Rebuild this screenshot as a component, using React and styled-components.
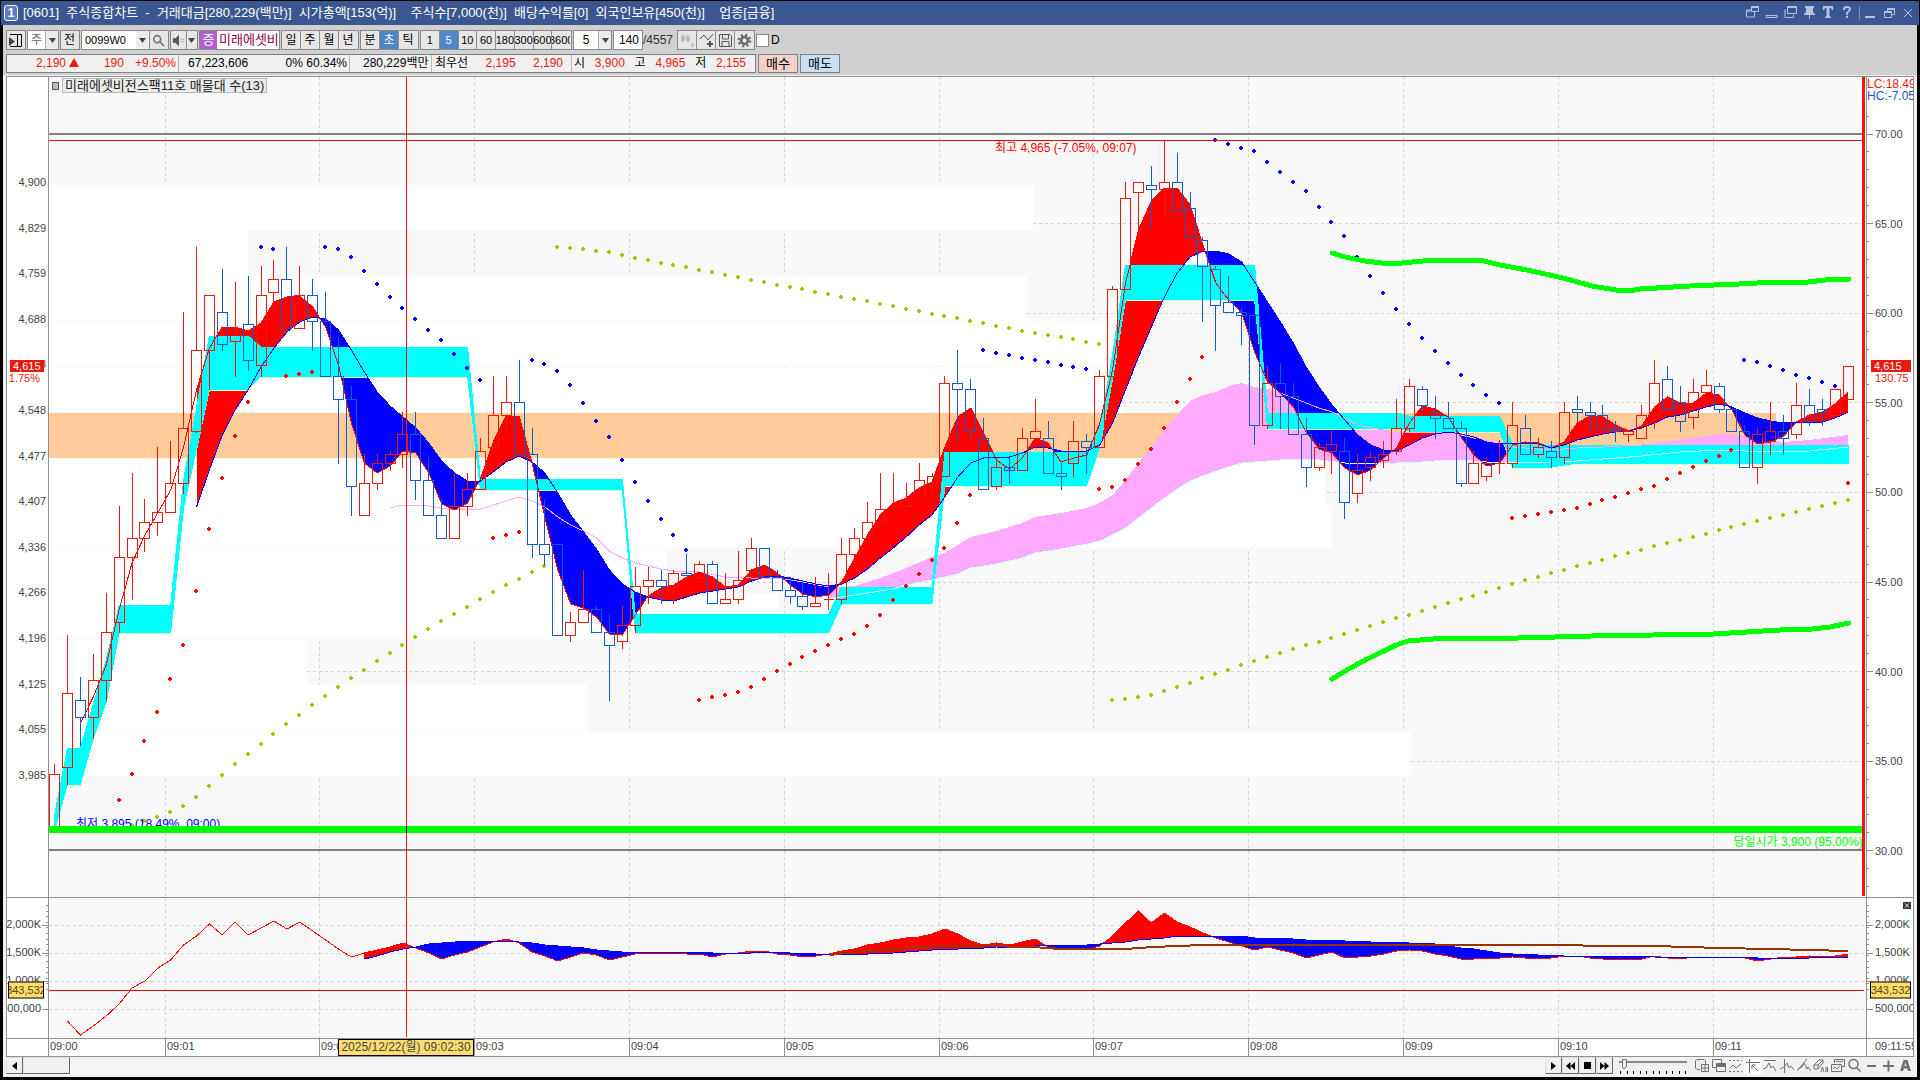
import React from "react";
import styled, { createGlobalStyle } from "styled-components";

const FONT = '"Liberation Sans", "Noto Sans CJK KR", sans-serif';

const GlobalStyle = createGlobalStyle`
  * { box-sizing: border-box; }
  html, body { margin: 0; background: #000; }
  body, button, input, select { font-family: ${FONT}; font-size: 12px; line-height: 14px; }
`;

/* ---------- colours ---------- */
const UP = "#e81a0c";
const DOWN = "#145ac8";
const LINE = "#909090";

/* ---------- frame ---------- */
const Page = styled.div`
  display: flex;
  flex-direction: column;
  height: 100vh;
  min-height: 600px;
  padding: 1px 0 3px;
  background: #000;
  overflow: hidden;
`;
const TitleBar = styled.header`
  flex: none;
  display: flex;
  align-items: center;
  height: 24px;
  margin: 0 1px;
  padding: 0 2px 0 3px;
  background: #3a5792;
  color: #fff;
`;
const Badge = styled.span`
  width: 14px;
  height: 16px;
  margin-right: 5px;
  border: 1px solid #fff;
  border-radius: 3px;
  background: #5b7cc0;
  font-weight: bold;
  text-align: center;
`;
const Title = styled.h1`
  flex: 1;
  margin: 0;
  font-size: 13px;
  font-weight: normal;
  line-height: 16px;
  white-space: pre;
`;
const WindowTools = styled.div`
  display: flex;
  align-items: center;
  gap: 3px;
`;
const TitleButton = styled.button`
  display: flex;
  width: 16px;
  height: 16px;
  padding: 0;
  border: 0;
  background: none;
  color: #b4c2e2;
`;
const TitleRule = styled.span`
  width: 1px;
  height: 14px;
  background: #8090a8;
`;
const Body = styled.main`
  flex: 1;
  min-height: 0;
  display: flex;
  flex-direction: column;
  margin: 0 3px;
  background: #f0f0f0;
`;
const Controls = styled.div`
  flex: none;
  display: flex;
  flex-direction: column;
  gap: 4px;
  padding: 5px 3px 2px;
  background: #d0d0d0;
  border-bottom: 1px solid #eee;
`;
const Row = styled.div`
  display: flex;
  align-items: center;
  gap: ${(p) => p.$gap || 0}px;
`;

/* ---------- toolbar ---------- */
const Group = styled.div`
  flex: none;
  display: flex;
  width: ${(p) => (p.$w ? p.$w + "px" : "auto")};
  height: 20px;
  border: 1px solid #888;
  background: ${(p) => p.$bg || "#eee"};
  overflow: hidden;
`;
const ToolButton = styled.button`
  flex: ${(p) => p.$flex || "1 1 0"};
  min-width: 0;
  display: flex;
  align-items: center;
  justify-content: center;
  padding: 0;
  border: 0;
  border-right: 1px solid ${(p) => (p.$last ? "transparent" : "#8c8c8c")};
  background: ${(p) => (p.$on ? "#4f86c6" : p.$bg || "#e6e6e6")};
  color: ${(p) => (p.$on ? "#fff" : p.$color || "#000")};
  font-size: ${(p) => (p.$small ? 11 : 12)}px;
  overflow: hidden;
  white-space: nowrap;
`;
const Field = styled.input`
  flex: 1;
  min-width: 0;
  height: 18px;
  padding: 0 3px;
  border: 0;
  background: #fff;
  text-align: ${(p) => p.$align || "left"};
  font-size: ${(p) => (p.$small ? 11 : 12)}px;
  color: #000;
`;
const Picker = styled.select`
  flex: 1;
  min-width: 0;
  height: 18px;
  padding: 0 3px;
  border: 0;
  border-radius: 0;
  appearance: none;
  background: #fff;
  color: ${(p) => p.$color || "#000"};
  text-align: center;
`;
const ArrowCell = styled.span`
  flex: none;
  display: flex;
  align-items: center;
  justify-content: center;
  width: 13px;
  border-left: 1px solid #aaa;
  background: #ececec;
`;
const Stock = styled.div`
  flex: none;
  display: flex;
  width: 81px;
  height: 20px;
  border: 1px solid #888;
  background: #fff;
  color: #8c0046;
  font-size: 13px;
  line-height: 18px;
  white-space: nowrap;
  overflow: hidden;
`;
const StockMark = styled.span`
  flex: none;
  width: 17px;
  margin-right: 2px;
  background: #b060d0;
  color: #fff;
  text-align: center;
`;
const Total = styled.span`
  width: 33px;
  margin-left: -1px;
  color: #333;
`;
const Check = styled.label`
  display: flex;
  align-items: center;
  gap: 2px;
  input {
    width: 13px;
    height: 13px;
    margin: 0;
    border: 1px solid #888;
    appearance: none;
    background: #fff;
  }
`;

/* ---------- quote line ---------- */
const Quote = styled.dl`
  flex: none;
  display: flex;
  width: 750px;
  height: 19px;
  margin: 0;
  border: 1px solid #808080;
  background: #f0f0f0;
  line-height: 17px;
`;
const Cell = styled.div`
  display: flex;
  justify-content: space-between;
  width: ${(p) => p.$w}px;
  padding: ${(p) => p.$pad};
  border-right: ${(p) => (p.$last ? "0" : "1px solid #b8b8b8")};
  white-space: nowrap;
  dt, dd { margin: 0; }
`;
const ChangeCell = styled(Cell)`
  gap: 11px;
  dd:first-child { margin-right: auto; }
`;
const Red = styled.dd`
  color: #e81a0c;
`;
const Triangle = styled.svg`
  margin-left: 3px;
`;
const OrderButton = styled.button`
  width: 40px;
  height: 19px;
  padding: 0;
  border: 1px solid #808080;
  background: ${(p) => p.$bg};
  color: #000;
  font-size: 13px;
`;

/* ---------- chart ---------- */
const ChartFrame = styled.section`
  flex: 1;
  min-height: 0;
  display: grid;
  grid-template-columns: 42px minmax(0, 1fr) 47px;
  grid-template-rows: minmax(0, 820fr) minmax(0, 140fr) 17px;
  row-gap: 1px;
  margin: 0 3px;
  border: 1px solid ${LINE};
  background: ${LINE};
`;
const Pane = styled.div`
  position: relative;
  min-width: 0;
  min-height: 0;
  background: ${(p) => p.$bg || "#f8f8f8"};
  overflow: hidden;
`;
const Axis = styled.div`
  position: relative;
  min-height: 0;
  background: #fff;
  border-left: ${(p) => (p.$side === "right" ? `1px solid ${LINE}` : "0")};
  border-right: ${(p) => (p.$side === "left" ? `1px solid ${LINE}` : "0")};
  overflow: hidden;
`;
const Fill = styled.svg`
  display: block;
  width: 100%;
  height: 100%;
`;
const AxisLabel = styled.span`
  position: absolute;
  ${(p) => (p.$side === "left" ? `right: ${p.$inset || 2}px;` : "left: 8px;")}
  transform: translateY(-50%);
  color: ${(p) => p.$color || "#444"};
  font-size: 11px;
  line-height: 12px;
  white-space: nowrap;
`;
const PriceTag = styled(AxisLabel)`
  ${(p) => (p.$side === "left" ? "right: 4px; width: 34px;" : "left: 4px; width: 40px;")}
  padding: 0 3px;
  background: ${UP};
  color: #fff;
`;
const CrossTag = styled.span`
  position: absolute;
  left: ${(p) => (p.$side === "left" ? 1 : 3)}px;
  right: ${(p) => (p.$side === "left" ? 4 : 2)}px;
  transform: translateY(-50%);
  display: flex;
  justify-content: center;
  border: 1px solid #000;
  background: #ffdd6e;
  color: #554400;
  font-size: 11px;
  line-height: 15px;
  overflow: hidden;
`;
const Corner = styled.div`
  position: absolute;
  top: 1px;
  left: 0;
  color: ${UP};
  font-size: 12px;
  line-height: 12px;
  white-space: nowrap;
  span { display: block; color: ${DOWN}; }
`;
const Note = styled.span`
  position: absolute;
  color: ${(p) => p.$color};
  font-size: 12px;
  line-height: 12px;
  white-space: nowrap;
`;
const Legend = styled.div`
  position: absolute;
  top: 1px;
  left: 3px;
  display: flex;
  align-items: center;
  gap: 3px;
  color: #222;
  font-size: 13px;
  &::before { content: ""; width: 5px; height: 6px; border: 1px solid #555; background: #bbb; }
  span { padding: 0 2px; border: 1px solid #b8b8b8; background: #ececec; line-height: 13px; }
`;
const TimeLabel = styled.span`
  position: absolute;
  top: 0;
  height: 17px;
  padding-left: 1px;
  border-left: ${(p) => (p.$first ? "0" : `1px solid ${LINE}`)};
  color: #444;
  font-size: 11px;
  line-height: 15px;
`;
const TimeTag = styled.span`
  position: absolute;
  top: 0;
  width: 136px;
  height: 17px;
  border: 1px solid #000;
  background: #ffdd6e;
  color: #444;
  font-size: 12px;
  line-height: 14px;
  text-align: center;
  white-space: nowrap;
`;
const PaneClose = styled.button`
  position: absolute;
  top: 4px;
  right: 2px;
  width: 8px;
  height: 7px;
  padding: 0;
  border: 0;
  background: #333;
  display: flex;
`;
const BaseBand = styled.div`
  position: absolute;
  left: 0;
  right: 0;
  height: 7px;
`;

/* ---------- bottom bar ---------- */
const BottomBar = styled.footer`
  flex: none;
  display: flex;
  height: 20px;
  padding: 0 3px 2px;
  background: #f0f0f0;
`;
const Track = styled.div`
  flex: 1;
  display: flex;
  background: repeating-conic-gradient(#f0f0f0 0 25%, #f9f9f9 0 50%) 0 0 / 2px 2px;
`;
const Raised = styled.button`
  width: ${(p) => p.$w}px;
  height: 17px;
  display: flex;
  align-items: center;
  justify-content: center;
  padding: 0;
  border: 1px solid;
  border-color: #e0e0e0 #666 #666 #e0e0e0;
  background: #f0f0f0;
  color: #000;
`;
const Speed = styled.label`
  display: flex;
  width: 80px;
  justify-content: center;
  position: relative;
  input { position: absolute; inset: 0; margin: 0; opacity: 0; }
`;
const DrawTool = styled.button`
  width: 17px;
  height: 17px;
  display: flex;
  align-items: center;
  justify-content: center;
  padding: 0;
  border: 0;
  background: ${(p) => (p.$on ? "#fff" : "none")};
  color: #707070;
`;

/* ---------- data ---------- */
const X0 = 54.6;
const STEP = 12.903;
const cx = (i) => X0 + STEP * i;

/* [up, high, top, bottom, low] */
const CANDLES = [
  [1,764,774,829,829],[1,635,693,767,785],[0,677,700,717,746],[1,654,680,717,739],[1,593,632,680,701],
  [1,506,557,622,633],[1,473,538,557,600],[1,499,522,538,552],[1,447,512,522,536],[1,441,483,512,512],
  [1,312,428,483,494],[1,247,350,431,433],[1,295,295,350,390],[0,269,312,344,351],[1,282,334,341,377],
  [0,276,324,360,371],[1,266,295,365,377],[1,260,279,292,312],[0,247,279,328,328],[1,266,295,328,328],
  [0,279,295,321,351],[0,292,321,376,376],[0,337,376,399,464],[0,386,399,486,516],[1,454,483,515,515],
  [1,454,463,483,490],[1,451,454,463,471],[1,412,434,454,468],[0,412,434,480,500],[0,457,480,515,515],
  [0,499,515,538,538],[1,473,506,538,538],[1,473,489,506,516],[1,438,451,489,489],[1,376,415,447,454],
  [1,376,402,415,434],[0,360,402,454,454],[0,428,454,544,558],[0,499,544,554,565],[0,544,544,635,635],
  [1,612,622,635,642],[1,570,609,622,622],[0,606,609,632,632],[0,615,632,645,701],[1,606,625,641,649],
  [1,567,586,625,633],[1,567,580,586,604],[0,570,580,586,604],[1,570,573,586,604],[0,554,573,575,575],
  [1,561,564,577,577],[0,561,564,603,603],[1,573,599,603,603],[1,551,580,599,604],[1,538,548,570,570],
  [0,548,548,577,577],[0,570,577,590,590],[0,577,590,596,604],[0,583,596,606,610],[1,577,603,606,606],
  [1,573,599,599,610],[1,538,554,599,604],[1,528,538,554,568],[1,502,522,538,538],[1,473,509,522,525],
  [1,473,506,506,510],[1,483,499,506,506],[1,463,480,499,499],[1,473,476,483,493],[1,376,383,476,476],
  [0,350,383,389,442],[0,379,389,431,439],[0,418,438,489,489],[1,457,467,486,490],[0,457,467,470,484],
  [1,428,438,470,470],[1,399,431,438,438],[0,421,438,473,473],[0,463,473,476,490],[1,421,441,463,477],
  [0,434,441,447,474],[1,370,376,447,447],[1,286,289,376,376],[1,182,198,289,289],[1,182,182,192,237],
  [0,166,185,189,228],[1,141,182,189,216],[0,153,182,211,211],[0,192,208,237,237],[0,237,240,266,322],
  [0,266,269,305,351],[0,276,302,312,312],[0,308,312,315,345],[0,315,315,425,445],[1,366,383,425,429],
  [0,363,383,396,429],[0,383,396,434,434],[0,418,434,467,487],[1,443,447,467,471],[1,431,444,451,474],
  [0,438,451,502,519],[1,454,470,493,503],[1,451,457,467,481],[1,441,454,460,468],[1,399,428,451,455],
  [1,379,386,428,432],[0,386,389,405,413],[0,396,412,418,439],[0,402,418,428,428],[0,421,428,483,487],
  [1,451,463,483,483],[1,457,463,476,481],[1,440,463,463,474],[1,402,425,463,468],[0,415,428,454,454],
  [1,438,447,454,458],[0,441,451,457,468],[1,402,412,457,464],[0,396,409,412,422],[0,402,412,415,432],
  [0,405,415,428,428],[0,421,428,431,442],[1,431,431,434,442],[1,405,415,438,438],[1,360,383,415,429],
  [0,366,379,409,409],[0,386,402,421,432],[1,379,392,417,429],[1,370,385,392,392],[0,383,386,409,413],
  [0,409,409,431,431],[0,425,431,467,467],[1,428,434,467,484],[1,402,431,441,455],[0,415,431,438,455],
  [1,383,405,434,439],[0,389,405,421,426],[0,399,409,412,426],[1,389,389,415,415],[1,366,366,399,399],
];

/* short average from candle 2, long average from candle 11 */
const SHORT = [
  723,697,665,610,563,535,513,490,447,390,348,327,327,331,323,302,297,296,307,327,365,423,463,473,466,451,453,473,504,510,503,479,442,416,416,463,517,570,604,608,617,634,635,615,
  596,588,585,577,572,577,587,585,570,565,573,585,594,597,595,582,558,535,515,503,498,488,482,447,417,408,433,460,469,458,438,443,462,458,455,423,370,283,230,201,188,188,205,245,283,300,313,352,382,393,407,432,449,453,468,475,470,458,448,423,406,409,417,437,455,466,463,445,442,443,448,442,423,416,417,425,431,
  426,407,397,403,403,393,395,410,435,444,442,436,422,415,412,404,392,
];
const LONG = [
  507,470,435,410,390,367,348,332,322,317,319,330,350,372,392,406,417,428,443,461,473,481,481,472,462,456,462,473,493,515,532,549,570,584,592,
  597,600,601,597,593,591,589,587,581,577,576,578,581,584,586,584,578,569,558,548,537,525,515,497,477,463,458,457,457,453,447,448,451,451,451,445,423,390,357,327,297,273,257,251,251,254,262,282,302,322,343,367,387,405,420,435,445,450,451,445,438,434,432,434,437,442,444,443,443,444,448,445,440,437,434,432,431,
  428,423,417,415,411,407,404,407,413,418,421,423,422,422,422,418,412,
];

/* volume indicator */
const VOL_LEAD = [1021,1035,1026,1016,1004,988,981,968,960,945,936,924,935,922,935,928,921,929,922,931,940,949,957,953];
const VOL_SHORT = [
  953,950,947,943,948,953,959,955,952,947,942,939,943,952,956,961,957,953,955,960,957,954,
  953,954,953,954,954,957,954,953,951,951,954,955,957,956,954,951,949,945,943,940,938,937,934,929,934,941,945,943,945,942,939,947,949,949,950,946,936,923,911,923,913,922,927,933,938,942,946,950,947,950,953,958,955,952,958,957,956,954,951,
  950,951,954,956,959,959,958,958,957,958,958,958,956,956,958,959,959,959,959,956,958,959,957,957,957,957,958,961,959,957,957,956,957,956,954,
];
const VOL_LONG = [
  959,956,952,949,947,944,943,942,941,941,941,941,942,943,945,946,947,948,950,951,952,952,
  952,952,952,952,952,953,953,953,953,952,952,953,953,954,954,954,954,954,953,953,952,951,950,949,949,948,948,947,947,946,946,945,945,945,945,944,943,942,940,939,938,936,936,936,936,936,936,938,938,938,939,940,940,940,941,941,942,942,942,
  943,943,944,946,948,949,951,953,954,954,955,955,956,956,956,956,956,956,956,957,957,957,957,957,957,957,957,958,958,958,958,958,957,957,957,
];

const CYAN_TOP = [[0,815],[1,748],[2,748],[3,704],[4,660],[5,605],[9,605],[10,480],[11,408],[12,336],[15,336],[16,347],[32,347],[33,479],[44,479],[45,614],[60,614],[61,587],[68,587],[69,452],[80,452],[81,428],[82,355],[83,265],[93,265],[94,413],[104,413],[105,416],[112,416],[113,445],[139,445]];
const CYAN_BOTTOM = [[0,830],[1,784],[2,784],[3,738],[4,702],[5,632],[9,632],[10,507],[11,449],[12,389],[15,389],[16,376],[32,376],[33,489],[44,489],[45,632],[60,632],[61,603],[68,603],[69,485],[80,485],[81,447],[82,378],[83,299],[93,299],[94,428],[104,428],[105,431],[112,431],[113,467],[116,467],[118,463],[139,463]];
const PINK_LINE = [[26,508],[27,505],[29,506],[30,508],[31,510],[33,509],[35,501],[36,497],[37,501],[38,507],[39,517],[40,525],[41,531],[42,538],[43,551],[44,558],[45,563],[46,566],[47,569],[48,571],[50,572],[52,577],[54,578],[56,578],[58,582],[60,587]];
const PINK_TOP = [[60,588],[61,587],[62,586],[64,578],[66,568],[68,557],[69,553],[70,545],[71,537],[73,531],[75,523],[76,517],[78,513],[80,508],[81,503],[82,495],[83,480],[84,463],[85,447],[86,430],[87,415],[88,401],[89,395],[90,392],[91,386],[92,383],[93,387],[94,389],[95,393],[96,398],[98,408],[99,412],[100,418],[101,425],[102,428],[103,430],[104,433],[108,432],[110,438],[112,443],[113,447],[116,450],[118,448],[120,447],[123,445],[125,442],[127,438],[129,434],[130,434],[131,436],[132,439],[134,442],[136,440],[139,435]];
const PINK_BOTTOM = [[60,598],[61,597],[63,593],[65,589],[66,585],[68,580],[70,574],[71,568],[73,564],[75,558],[76,553],[78,549],[80,544],[81,541],[82,535],[83,528],[84,518],[85,508],[86,498],[87,489],[88,481],[89,476],[90,471],[91,467],[92,463],[93,462],[96,459],[98,460],[100,463],[101,464],[104,463],[106,462],[108,460],[110,461],[112,463],[116,462],[117,462],[120,459],[123,456],[126,452],[129,450],[133,452],[136,451],[139,447]];

const GREEN_TOP = "1332,253 1345,257 1365,261 1382,263 1402,263 1433,260 1480,260 1500,265 1527,270 1563,278 1592,286 1616,290 1629,291 1640,289 1690,286 1739,284 1776,282 1800,283 1825,280 1849,279";
const GREEN_BOTTOM = "1332,679 1347,670 1365,660 1384,651 1396,645 1408,641 1445,638 1518,638 1592,636 1714,634 1780,630 1812,629 1830,627 1849,623";
const BROWN = "830,955 853,952 893,949 920,947 947,946 980,946 1033,947 1060,949 1125,949 1153,947 1203,945 1400,945 1512,945 1654,946 1720,948 1770,949 1848,951";

/* dotted trails: first candle, then a y for each candle */
const DOTS = [
  ["#0000ff", 16, [247,249]],
  ["#0000ff", 21, [247,249,257,271,284,297,308,319,330,340,354,368,380]],
  ["#0000ff", 37, [360,364,371,385,403,421,437,460,482,501,519,535,550]],
  ["#0000ff", 72, [350,353,355,358,360,362,365,367,369]],
  ["#0000ff", 90, [140,144,148,151,162,172,182,191,207,222,236,257,276,293,309,324,338,351,363,375,385,395,403]],
  ["#0000ff", 131, [360,362,366,370,375,378,382,386]],
  ["#ff0000", 5, [800,774,741,712,679,645,591,529,478,436,402]],
  ["#ff0000", 18, [376,374,372]],
  ["#ff0000", 34, [538,535,532]],
  ["#ff0000", 50, [700,697,695,692,687,679,671,664,657,651,645,639,634,626,615,600,586,574,560,548,523,495]],
  ["#ff0000", 81, [489,487,480,464,449,428,402,379,357]],
  ["#ff0000", 113, [518,516,514,512,510,508,504,500,497,493,489,486,479,473,467,461,456,450]],
  ["#ff0000", 139, [483]],
  ["#99cc00", 6, [825,821,817,812,806,797,786,775,764,754,744,734,724,715,705,696,687,678,670,661,653,645,637,629,621,614,607,599,592,585,579,572,566]],
  ["#99cc00", 39, [247,248,249,251,252,255,258,260,263,265,267,270,272,275,277,280,282,285,287,289,292,294,297,299,301,304,306,309,311,314,316,318,321,323,326,328,331,333,335,337,339,342,344]],
  ["#99cc00", 82, [700,699,697,695,691,687,683,678,674,670,665,661,657,653,649,645,642,638,634,630,626,622,618,615,611,607,603,599,596,592,588,584,580,577,573,570,566,563,560,556,553,550,546,543,540,537,534,530,527,524,521,518,515,512,509,506,503,500]],
];

const BANDS = [[185,1033],[230,248],[275,1027],[321,1116],[367,1122],[413,1776,"#ffcc99"],[458,1325],[503,1332],[549,666],[594,778],[640,307],[685,587],[731,1411]];
const TIMES = Array.from({ length: 11 }, (_, k) => 165 + 154.8 * k);
const LEVELS = Array.from({ length: 9 }, (_, k) => 134 + 89.6 * k);
const PRICES = ["4,900","4,829","4,759","4,688","4,618","4,548","4,477","4,407","4,336","4,266","4,196","4,125","4,055","3,985"];
const VOLUMES = [["2,000K",924],["1,500K",952],["1,000K",980],["500,000",1008]];

const LEFT = 49;
const WIDTH = 1817;
const atX = (x) => `${((x - LEFT) / WIDTH) * 100}%`;
const mainY = (y) => `${((y - 77) / 820) * 100}%`;
const subY = (y) => `${((y - 898) / 140) * 100}%`;

const series = (from, ys) => ys.map((y, k) => `${cx(from + k).toFixed(1)},${y}`).join(" ");
const points = (list, dy = 0) => list.map(([i, y]) => `${cx(i).toFixed(1)},${y + dy}`);

/* one path for the stretches where a is above b */
function areaBetween(from, a, b) {
  let d = "";
  for (let k = 0; k < a.length - 1; k += 1) {
    const d0 = b[k] - a[k];
    const d1 = b[k + 1] - a[k + 1];
    if (d0 <= 0 && d1 <= 0) continue;
    const x0 = cx(from + k);
    const x1 = cx(from + k + 1);
    if (d0 >= 0 && d1 >= 0) {
      d += `M${x0} ${a[k]}L${x1} ${a[k + 1]}L${x1} ${b[k + 1]}L${x0} ${b[k]}Z`;
    } else {
      const t = d0 / (d0 - d1);
      const xm = x0 + (x1 - x0) * t;
      const ym = a[k] + (a[k + 1] - a[k]) * t;
      d += d0 > 0
        ? `M${x0} ${a[k]}L${xm} ${ym}L${x0} ${b[k]}Z`
        : `M${xm} ${ym}L${x1} ${a[k + 1]}L${x1} ${b[k + 1]}Z`;
    }
  }
  return d;
}

function TimeGrid({ top, bottom }) {
  return TIMES.map((x) => (
    <line key={x} x1={Math.floor(x) + 0.5} x2={Math.floor(x) + 0.5} y1={top} y2={bottom} stroke="#d2d2d2" strokeDasharray="3 3" />
  ));
}

function MainPlot() {
  const shortTail = SHORT.slice(9);
  return (
    <Fill viewBox="49 77 1817 820" preserveAspectRatio="none" shapeRendering="crispEdges" fill="none" role="img" aria-label="가격 차트">
      <TimeGrid top={77} bottom={897} />
      {LEVELS.slice(1, 8).map((y) => (
        <line key={y} x1="49" x2="1862" y1={Math.floor(y) + 0.5} y2={Math.floor(y) + 0.5} stroke="#d2d2d2" strokeDasharray="3 3" />
      ))}
      {BANDS.map(([y, right, color]) => (
        <rect key={y} x="49" y={y} width={right - 49} height="44.5" fill={color || "#fff"} />
      ))}
      <polygon points={[...points(PINK_TOP), ...points(PINK_BOTTOM).reverse()].join(" ")} fill="#ffaaff" />
      <path d={areaBetween(11, shortTail, LONG)} fill="#ff0000" />
      <path d={areaBetween(11, LONG, shortTail)} fill="#0000ff" />
      <polyline points={points(CYAN_BOTTOM, 1).join(" ")} stroke="#d4ffc0" />
      <polygon points={[...points(CYAN_TOP), ...points(CYAN_BOTTOM).reverse()].join(" ")} fill="#00ffff" stroke="#00ffff" />
      <polyline points={points(PINK_LINE).join(" ")} stroke="#ffaaff" />
      <polyline points={points(PINK_TOP.slice(27, 47)).join(" ")} stroke="#ffaaff" />
      <polyline points={points(PINK_BOTTOM).join(" ")} stroke="#ccffff" />
      <polyline points={series(2, SHORT)} stroke="#ff0000" />
      <polyline points={series(11, LONG)} stroke="#0000ff" />
      {DOTS.map(([color, from, ys]) => ys.map((y, k) => {
        const x = Math.floor(cx(from + k));
        return <path key={`${from}-${k}-${y}`} d={`M${x - 1} ${y - 2}h2v1h1v2h-1v1h-2v-1h-1v-2h1z`} fill={color} />;
      }))}
      <polyline points={GREEN_TOP} stroke="#00ff00" strokeWidth="5" strokeLinecap="round" />
      <polyline points={GREEN_BOTTOM} stroke="#00ff00" strokeWidth="5" strokeLinecap="round" />
      {CANDLES.map(([up, high, top, bottom, low], i) => {
        const x = Math.floor(cx(i)) + 0.5;
        return (
          <path
            key={i}
            d={`M${x - 5} ${top + 0.5}h10V${bottom + 0.5}h-10ZM${x} ${high}V${top}M${x} ${bottom}V${low}`}
            stroke={up ? UP : DOWN}
          />
        );
      })}
      <rect x="49" y="133" width="1813" height="2" fill="#808080" />
      <rect x="49" y="140" width="1813" height="1" fill="#ff0000" />
      <rect x="49" y="849" width="1813" height="2" fill="#808080" />
      <rect x="406" y="77" width="1" height="820" fill={UP} />
      <rect x="1862" y="77" width="3" height="819" fill={UP} />
    </Fill>
  );
}

function GreenBase() {
  return (
    <Fill viewBox="0 0 1817 7" preserveAspectRatio="none" shapeRendering="crispEdges" aria-hidden="true">
      <rect width="1813" height="7" fill="#00ff00" />
      <rect x="357" width="1" height="7" fill="#0000a0" />
    </Fill>
  );
}

function SubPlot() {
  return (
    <Fill viewBox="49 898 1817 140" preserveAspectRatio="none" shapeRendering="crispEdges" fill="none" role="img" aria-label="거래량 지표">
      <TimeGrid top={898} bottom={1038} />
      {[925.5, 953.5, 981.5, 1009.5].map((y) => (
        <line key={y} x1="49" x2="1864" y1={y} y2={y} stroke="#d2d2d2" strokeDasharray="3 3" />
      ))}
      <path d={areaBetween(24, VOL_SHORT, VOL_LONG)} fill="#ff0000" />
      <path d={areaBetween(24, VOL_LONG, VOL_SHORT)} fill="#0000ff" />
      <polyline points={series(1, VOL_LEAD)} stroke="#ff0000" />
      <polyline points={series(24, VOL_SHORT)} stroke="#ff0000" />
      <polyline points={series(24, VOL_LONG)} stroke="#0000ff" />
      <polyline points={BROWN} stroke="#993300" strokeWidth="2" />
      <rect x="49" y="990" width="1815" height="1" fill="#ff0000" />
      <rect x="406" y="898" width="1" height="139" fill={UP} />
    </Fill>
  );
}

function Ticks({ side, sub }) {
  const w = side === "left" ? 41 : 46;
  const minor = [];
  const major = [];
  if (sub) {
    for (let k = 0; k < 16; k += 1) minor.push(905.5 + 5.6 * k);
    [925.5, 953.5, 981.5, 1009.5].forEach((y) => major.push(y));
  } else if (side === "right") {
    for (let k = -1; k < 43; k += 1) minor.push(Math.floor(134 + 17.92 * k) + 0.5);
    LEVELS.forEach((y) => major.push(Math.floor(y) + 0.5));
  }
  const seg = (y, len) => (side === "left" ? `M${w - len} ${y}H${w}` : `M0 ${y}H${len}`);
  return (
    <Fill viewBox={sub ? `0 898 ${w} 140` : `0 77 ${w} 820`} preserveAspectRatio="none" shapeRendering="crispEdges" aria-hidden="true">
      <path d={minor.map((y) => seg(y, 2)).join("") + major.map((y) => seg(y, 6)).join("")} stroke={LINE} fill="none" />
    </Fill>
  );
}

/* ---------- icons ---------- */
const Icon = ({ d, size = 15, fill = "none", width = 1, children }) => (
  <svg width={size} height={size} viewBox="0 0 15 15" fill={fill} stroke="currentColor" strokeWidth={width} aria-hidden="true">
    {d && <path d={d} />}
    {children}
  </svg>
);
const Down = () => (
  <svg width="7" height="5" viewBox="0 0 7 5" aria-hidden="true"><path d="M0 0h7L3.500 5z" fill="#444" /></svg>
);

const TITLE_ICONS = [
  ["새 창", <Icon key="i" d="M6.500 1.500h7v5h-7zM6 5H1.500v7h8V7M2 6h4M7 2.500h6" />],
  ["최소화", <Icon key="i" d="M2 10.500h11v2H2z" />],
  ["복제", <Icon key="i" d="M4.500 1.500h9v7h-9zM2 5v7.500h8.500V10M2 5h1M5 2.500h8" />],
  ["고정", <Icon key="i"><path d="M3 1h9v2h-1v4l2 2v1H2V9l2-2V3H3zM7 10h1v4H7z" fill="currentColor" stroke="none" /></Icon>],
  ["글꼴", <Icon key="i"><path d="M2 1h10v4h-1l-1-2H8.500v8l1.500 1v1H4v-1l1.500-1V3H4L3 5H2z" fill="currentColor" stroke="none" /></Icon>],
  ["도움말", <Icon key="i" width={2} d="M4 5V4q0-2 3-2t3 2q0 2-3 4v2M7 11v2" />],
];
const WINDOW_ICONS = [
  ["창 최소화", <Icon key="i" width={2} d="M2 12h10" />],
  ["창 복원", <Icon key="i" d="M5.500 6V3.500h7v6h-2M5 4.500h7M2.500 6.500h7v6h-7zM3 7.500h6" />],
  ["닫기", <Icon key="i" d="M3 4l8 8M11 4l-8 8" />],
];
const DRAW_ICONS = [
  ["추가", <Icon key="i"><path d="M11.500 6V3l-1.500-1.500H3L1.500 3v7L3 11.500h3M7.500 6.500h7v7h-7zM8 10h6M11 7v6" /></Icon>],
  ["겹치기", <Icon key="i"><path d="M6 9.500H1.500v-8h9V5M5.500 5.500h9v8h-9z" /><path d="M6 6h8v3H6z" fill="currentColor" stroke="none" /></Icon>],
  ["영역", <Icon key="i"><path d="M1 2.500h13M1 13.500h13" strokeDasharray="2 2" /><path d="M2 10l3-3 3 3 5-4" /></Icon>],
  ["십자선", <Icon key="i" d="M4.500 1v14M1 4.500h14M7 7l6 6M7 11V7h4" />],
  ["수평선", <Icon key="i" d="M2 2.500h12M1 11l3-1 3-5 2 5 2-2 3 5" />],
  ["수직선", <Icon key="i" d="M5.500 1v14M1 11l4-2 3-4 2 5 2-2 3 4" />],
  ["추세선", <Icon key="i" d="M1 13L11 1M2 11l4-2 2-4 3 6 1-2 3 4" />],
  ["모두 지우기", <Icon key="i"><path d="M1 7l5-5h4v3l-5 6H1zM1 7h4l5-5M5 7v4" /><path d="M8 14l1.500-5 1.500 5M13 9v5M14.500 9v5" /></Icon>],
  ["차트 묶음", <Icon key="i" d="M4.500 5V1.500h10v7H12M1.500 6.500h10v7h-10zM3 11l2-2 2 2 3-3M6 4l2-1 2 1 3-1" />],
  ["돋보기", <Icon key="i" width={1.5} d="M11 6a4.500 4.500 0 1 1-9 0a4.500 4.500 0 1 1 9 0M9.500 9.500l4 4" />],
  ["축소", <Icon key="i" width={2} d="M3 8h9" />],
  ["확대", <Icon key="i" width={2} d="M2 8h11M7.500 2.500v11" />],
];

function Toolbar() {
  return (
    <Row $gap={1}>
      <Group $w={20}>
        <ToolButton $last aria-label="목록 열기">
          <Icon><path d="M2 1.500h11.500v12H2M9.500 2v11" /><path d="M1 4v9l6-4.500z" fill="#444" stroke="none" /></Icon>
        </ToolButton>
      </Group>
      <Group $w={32}>
        <Picker aria-label="구분" defaultValue="주" $color="#666"><option>주</option></Picker>
        <ArrowCell><Down /></ArrowCell>
      </Group>
      <Group $w={20}><ToolButton $last>전</ToolButton></Group>
      <Group $w={88}>
        <Field aria-label="종목코드" defaultValue="0099W0" $small />
        <ToolButton $flex="0 0 14px" $bg="#ececec" aria-label="최근 종목"><Down /></ToolButton>
        <ToolButton $flex="0 0 18px" $last aria-label="종목 검색" $color="#777"><Icon width={2} size={13} d="M10 6a4 4 0 1 1-8 0a4 4 0 1 1 8 0M9 9l5 5" /></ToolButton>
      </Group>
      <Group $w={28}>
        <ToolButton $flex="1 1 0" aria-label="음성" $color="#555"><Icon size={13}><path d="M1 5h3l4-4v13l-4-4H1z" fill="#555" stroke="none" /><path d="M10 6h1M13 6h1M10 9h1M13 9h1" /></Icon></ToolButton>
        <ToolButton $flex="0 0 10px" $last aria-label="음성 설정"><Down /></ToolButton>
      </Group>
      <Stock><StockMark>증</StockMark>미래에셋비</Stock>
      <Group $w={78}>
        {["일", "주", "월", "년"].map((t, i) => <ToolButton key={t} $last={i === 3}>{t}</ToolButton>)}
      </Group>
      <Group $w={59}>
        {["분", "초", "틱"].map((t, i) => <ToolButton key={t} $last={i === 2} $on={t === "초"} aria-pressed={t === "초"}>{t}</ToolButton>)}
      </Group>
      <Group $w={152}>
        {["1", "5", "10", "60", "180", "300", "600", "3600"].map((t, i) => (
          <ToolButton key={t} $small $last={i === 7} $on={t === "5"} aria-pressed={t === "5"}>{t}</ToolButton>
        ))}
      </Group>
      <Group $w={39}>
        <Picker aria-label="간격" defaultValue="5"><option>5</option></Picker>
        <ArrowCell><Down /></ArrowCell>
      </Group>
      <Group $w={30}><Field aria-label="조회 개수" defaultValue="140" $align="right" /></Group>
      <Total>/4557</Total>
      <Group $w={78}>
        <ToolButton aria-label="봉 추가" $color="#bbb"><Icon d="M3 1v9M8 1v9M10 12h5M12.500 9.500v5"><path d="M1 3h4v5H1zM6 3h4v5H6z" fill="#bbb" stroke="none" /></Icon></ToolButton>
        <ToolButton aria-label="지표 추가" $color="#555"><Icon><path d="M1 6l4-4 4 5 5-6" /><path d="M8 11h6M11 8v6" strokeWidth="2" /></Icon></ToolButton>
        <ToolButton aria-label="저장" $color="#555"><Icon d="M2 1.500h10l1.500 1.500v10.500h-12V1.500zM4.500 2v4h6V2M4 13V8.500h7V13" /></ToolButton>
        <ToolButton aria-label="설정" $last $color="#666"><Icon><circle cx="7.500" cy="7.500" r="3.500" strokeWidth="2.500" /><circle cx="7.500" cy="7.500" r="5.800" strokeWidth="2" strokeDasharray="2.200 2.350" /></Icon></ToolButton>
      </Group>
      <Check><input type="checkbox" />D</Check>
    </Row>
  );
}

function QuoteLine() {
  return (
    <Row $gap={2}>
      <Quote>
        <ChangeCell $w={172} $pad="0 2px 0 29px">
          <Red>2,190<Triangle width="10" height="9" viewBox="0 0 10 9" aria-label="상승"><path d="M5 0l5 9H0z" fill="#e81a0c" /></Triangle></Red>
          <Red>190</Red>
          <Red>+9.50%</Red>
        </ChangeCell>
        <Cell $w={171} $pad="0 2px 0 9px"><dd>67,223,606</dd><dd>0% 60.34%</dd></Cell>
        <Cell $w={82} $pad="0 1px 0 13px"><dd>280,229백만</dd></Cell>
        <Cell $w={140} $pad="0 8px 0 3px"><dt>최우선</dt><Red>2,195</Red><Red>2,190</Red></Cell>
        <Cell $w={183} $last $pad="0 9px 0 2px"><dt>시</dt><Red>3,900</Red><dt>고</dt><Red>4,965</Red><dt>저</dt><Red>2,155</Red></Cell>
      </Quote>
      <OrderButton $bg="#f5d0ca">매수</OrderButton>
      <OrderButton $bg="#c6dff5">매도</OrderButton>
    </Row>
  );
}

export default function App() {
  return (
    <Page>
      <GlobalStyle />
      <TitleBar>
        <Badge>1</Badge>
        <Title>[0601]  주식종합차트  -  거래대금[280,229(백만)]  시가총액[153(억)]    주식수[7,000(천)]  배당수익률[0]  외국인보유[450(천)]    업종[금융]</Title>
        <WindowTools>
          {TITLE_ICONS.map(([name, icon]) => <TitleButton key={name} aria-label={name}>{icon}</TitleButton>)}
          <TitleRule />
          {WINDOW_ICONS.map(([name, icon]) => <TitleButton key={name} aria-label={name}>{icon}</TitleButton>)}
        </WindowTools>
      </TitleBar>
      <Body>
        <Controls>
          <Toolbar />
          <QuoteLine />
        </Controls>
        <ChartFrame>
          <Axis $side="left">
            {PRICES.map((p, i) => (
              <AxisLabel key={p} $side="left" style={{ top: mainY(182 + 45.6 * i) }}>{p}</AxisLabel>
            ))}
            <PriceTag $side="left" style={{ top: mainY(366) }}>4,615</PriceTag>
            <AxisLabel $side="left" $inset={8} $color={UP} style={{ top: mainY(378) }}>1.75%</AxisLabel>
          </Axis>
          <Pane>
            <MainPlot />
            <Legend><span>미래에셋비전스팩11호 매물대 수(13)</span></Legend>
            <Note $color="#ff0000" style={{ left: atX(995), top: mainY(142) }}>최고 4,965 (-7.05%, 09:07)</Note>
            <Note $color="#0000ff" style={{ left: atX(76), top: mainY(818) }}>최저 3,895 (18.49%, 09:00)</Note>
            <Note $color="#00ff00" style={{ right: 3, top: mainY(836) }}>당일시가 3,900 (95.00%)</Note>
            <BaseBand style={{ top: mainY(826) }}><GreenBase /></BaseBand>
          </Pane>
          <Axis $side="right">
            <Ticks side="right" />
            <Corner>LC:18.49<span>HC:-7.05</span></Corner>
            {LEVELS.map((y, i) => (
              <AxisLabel key={y} $side="right" style={{ top: mainY(y) }}>{(70 - 5 * i).toFixed(2)}</AxisLabel>
            ))}
            <PriceTag $side="right" style={{ top: mainY(366) }}>4,615</PriceTag>
            <AxisLabel $side="right" $color={UP} style={{ top: mainY(378) }}>130.75</AxisLabel>
          </Axis>

          <Axis $side="left">
            <Ticks side="left" sub />
            {VOLUMES.map(([t, y]) => <AxisLabel key={t} $side="left" $inset={7} style={{ top: subY(y) }}>{t}</AxisLabel>)}
            <CrossTag $side="left" style={{ top: subY(990) }}>343,532</CrossTag>
          </Axis>
          <Pane><SubPlot /></Pane>
          <Axis $side="right">
            <Ticks side="right" sub />
            {VOLUMES.map(([t, y]) => <AxisLabel key={t} $side="right" style={{ top: subY(y) }}>{t}</AxisLabel>)}
            <CrossTag $side="right" style={{ top: subY(990) }}>343,532</CrossTag>
            <PaneClose aria-label="지표 닫기">
              <svg width="8" height="7" viewBox="0 0 8 7"><path d="M2 1.500l4 4M6 1.500l-4 4" stroke="#fff" /></svg>
            </PaneClose>
          </Axis>

          <Axis $side="left" />
          <Pane $bg="#fff">
            <TimeLabel $first style={{ left: 0 }}>09:00</TimeLabel>
            {TIMES.map((x, i) => (
              <TimeLabel key={x} style={{ left: atX(Math.floor(x)) }}>09:{String(i + 1).padStart(2, "0")}</TimeLabel>
            ))}
            <TimeTag style={{ left: atX(338) }}>2025/12/22(월) 09:02:30</TimeTag>
          </Pane>
          <Axis $side="right">
            <AxisLabel $side="right" style={{ top: "44%" }}>09:11:55</AxisLabel>
          </Axis>
        </ChartFrame>
        <BottomBar>
          <Track>
            <Raised $w={17} aria-label="왼쪽으로"><svg width="5" height="8" viewBox="0 0 5 8"><path d="M5 0v8L0 4z" /></svg></Raised>
            <Raised $w={47} aria-label="스크롤 손잡이" />
          </Track>
          <Raised $w={17} aria-label="재생"><svg width="5" height="8" viewBox="0 0 5 8"><path d="M0 0v8l5-4z" /></svg></Raised>
          <Raised $w={17} aria-label="뒤로"><svg width="9" height="8" viewBox="0 0 9 8"><path d="M4.500 0v8L0 4zM9 0v8L4.500 4z" /></svg></Raised>
          <Raised $w={17} aria-label="정지"><svg width="7" height="7" viewBox="0 0 7 7"><path d="M0 0h7v7H0z" /></svg></Raised>
          <Raised $w={17} aria-label="앞으로"><svg width="9" height="8" viewBox="0 0 9 8"><path d="M0 0v8l4.500-4zM4.500 0v8L9 4z" /></svg></Raised>
          <Speed aria-label="재생 속도">
            <svg width="70" height="17" viewBox="0 0 70 17" shapeRendering="crispEdges" aria-hidden="true">
              <path d="M1 4h68v2H1z" fill="#888" />
              <path d="M4 2h4v8l-2 2-2-2z" fill="#eee" stroke="#777" />
              {Array.from({ length: 11 }, (_, i) => <path key={i} d={`M${Math.round(2 + 6.5 * i)} 14h1v3h-1z`} fill="#000" />)}
            </svg>
            <input type="range" min="0" max="10" defaultValue="0" />
          </Speed>
          {DRAW_ICONS.map(([name, icon]) => <DrawTool key={name} $on={name === "십자선"} aria-label={name}>{icon}</DrawTool>)}
          <DrawTool aria-label="글자"><Icon><path d="M5.500 2h4L13 13h-3l-1-2.500H6L5 13H2zM6.500 8h2L7.500 4.500z" fill="currentColor" fillRule="evenodd" stroke="none" /></Icon></DrawTool>
        </BottomBar>
      </Body>
    </Page>
  );
}
